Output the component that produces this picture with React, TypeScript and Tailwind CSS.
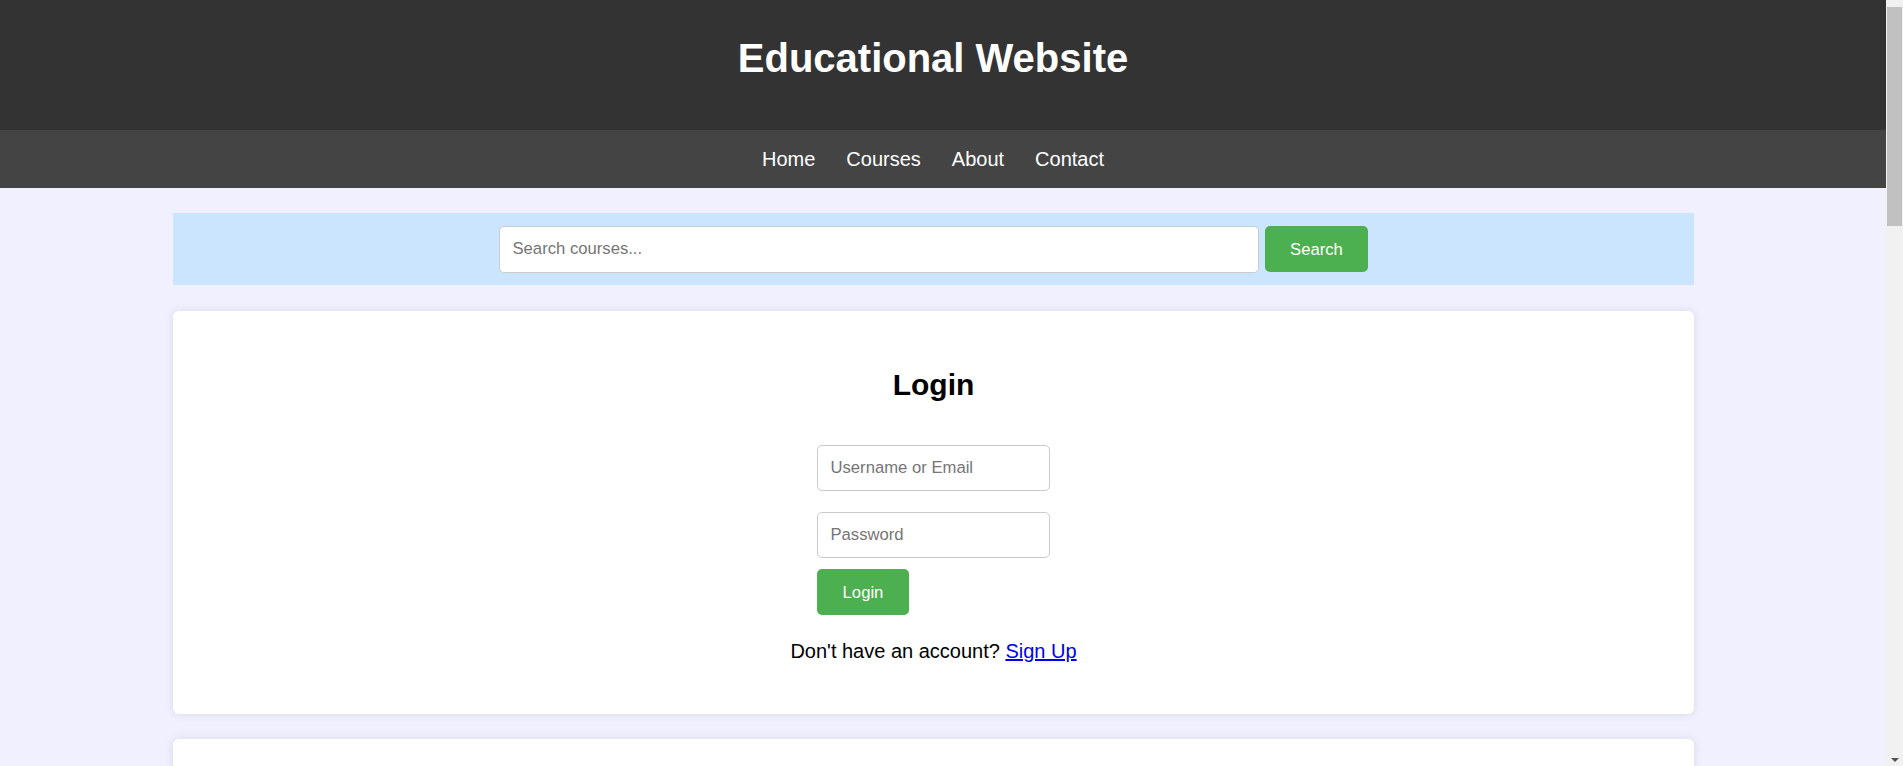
import { useState } from "react";

const font = { fontFamily: '"Liberation Sans", Arial, sans-serif' };

export default function App() {
    const [query, setQuery] = useState("");
    const [user, setUser] = useState("");
    const [pass, setPass] = useState("");

    return (
        <div className="min-h-screen bg-[#f0f0ff] text-[20px] text-black" style={font}>
            {/* header */}
            <header className="h-[130px] bg-[#333333] pt-[35px] pr-[37px] flex justify-center">
                <h1 className="text-[40px] leading-[46px] font-bold text-white">Educational Website</h1>
            </header>
            <nav className="h-[58px] bg-[#444444] pr-[37px] flex items-center justify-center gap-[31px]">
                <a href="#" className="text-white leading-[23px]">Home</a>
                <a href="#" className="text-white leading-[23px]">Courses</a>
                <a href="#" className="text-white leading-[23px]">About</a>
                <a href="#" className="text-white leading-[23px]">Contact</a>
            </nav>

            <main className="ml-[173px] w-[1521px] pb-[25px]">
                {/* search */}
                <div className="mt-[25px] h-[72px] bg-[#cce5ff] flex items-center justify-center gap-[6px]">
                    <input
                        type="text"
                        value={query}
                        onChange={(e) => setQuery(e.target.value)}
                        placeholder="Search courses..."
                        className="w-[760px] h-[47px] bg-white border-[1.25px] border-[#cccccc] rounded-[5px] px-[12.5px] text-[16.67px] placeholder:text-[#757575] focus:outline-none"
                    />
                    <button className="w-[103px] h-[46px] bg-[#4caf50] text-white text-[16.67px] rounded-[5px]">
                        Search
                    </button>
                </div>

                {/* login */}
                <section className="mt-[26px] bg-white rounded-[6px] shadow-[0_0_10px_rgba(0,0,0,0.1)] pt-[56px] pb-[51px] flex flex-col items-center">
                    <h2 className="text-[30px] leading-[35px] font-bold">Login</h2>
                    <form className="mt-[43px] flex flex-col items-start" onSubmit={(e) => e.preventDefault()}>
                        <input
                            type="text"
                            value={user}
                            onChange={(e) => setUser(e.target.value)}
                            placeholder="Username or Email"
                            className="w-[233px] h-[46px] border-[1.25px] border-[#cccccc] rounded-[5px] px-[12.5px] text-[16.67px] placeholder:text-[#757575] focus:outline-none"
                        />
                        <input
                            type="password"
                            value={pass}
                            onChange={(e) => setPass(e.target.value)}
                            placeholder="Password"
                            className="mt-[21px] w-[233px] h-[46px] border-[1.25px] border-[#cccccc] rounded-[5px] px-[12.5px] text-[16.67px] placeholder:text-[#757575] focus:outline-none"
                        />
                        <button className="mt-[11px] w-[92px] h-[46px] bg-[#4caf50] text-white text-[16.67px] rounded-[5px]">
                            Login
                        </button>
                    </form>
                    <p className="mt-[24.5px] leading-[23px]">
                        Don't have an account? <a href="#" className="text-[#0000ee] underline">Sign Up</a>
                    </p>
                </section>

                {/* more content below the fold */}
                <section className="mt-[25px] h-[1772px] bg-white rounded-[6px] shadow-[0_0_10px_rgba(0,0,0,0.1)]" />
            </main>

            {/* page scrollbar, as it appears in the screenshot */}
            <div className="fixed top-0 right-0 h-screen w-[17px] bg-[#f1f1f1] flex flex-col items-center">
                <div className="mt-[7px] h-[219px] w-[15px] bg-[#c1c1c1]" />
                <div className="mt-auto mb-[4px] w-0 h-0 border-l-[4px] border-r-[4px] border-t-[4px] border-l-transparent border-r-transparent border-t-[#505050]" />
            </div>
        </div>
    );
}
